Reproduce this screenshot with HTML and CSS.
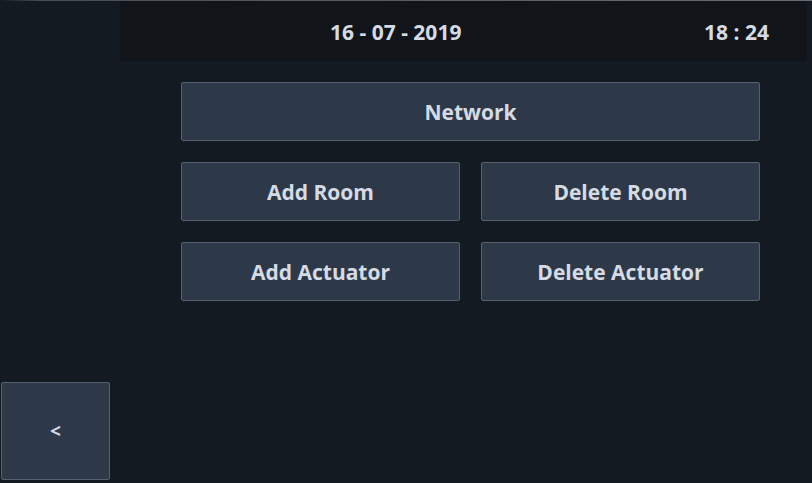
FILE: index.html
```html
<!DOCTYPE html>
<html>
<head>
<meta charset="utf-8">
<link rel="stylesheet" href="styles.css">
</head>
<body>
<div class="app">
  <div class="topline"></div>
  <header class="header">
    <span class="date">16 - 07 - 2019</span>
    <span class="time">18 : 24</span>
  </header>
  <main class="menu">
    <button class="btn wide">Network</button>
    <button class="btn">Add Room</button>
    <button class="btn">Delete Room</button>
    <button class="btn">Add Actuator</button>
    <button class="btn">Delete Actuator</button>
  </main>
  <footer class="footer">
    <button class="btn back">&lt;</button>
  </footer>
</div>
</body>
</html>
```
FILE: styles.css
```css
html, body {
  margin: 0;
  padding: 0;
  background: #141a22;
}
.app {
  width: 812px;
  height: 483px;
  display: flex;
  flex-direction: column;
  font-family: "Open Sans", "Noto Sans", sans-serif;
  font-weight: 700;
  color: #d5dbe4;
}
.topline {
  height: 1px;
  background: linear-gradient(to right, #141a22 0px, #4a4d52 40px, #6a6d70 100%);
}
.header {
  margin-left: 120px;
  width: 687px;
  height: 60px;
  background: #111519;
  display: flex;
  align-items: center;
  font-size: 21px;
  box-sizing: border-box;
  padding: 2px 0 0 210px;
}
.time {
  margin-left: auto;
  margin-right: 38px;
}
.menu {
  margin: 21px 0 0 181px;
  width: 579px;
  display: grid;
  grid-template-columns: 279px 279px;
  grid-auto-rows: 59px;
  column-gap: 21px;
  row-gap: 21px;
}
.btn {
  font: inherit;
  font-size: 21px;
  color: #d5dbe4;
  background: #2d3948;
  border: 1px solid #56616f;
  border-radius: 2px;
  padding: 0;
  box-sizing: border-box;
  margin: 0;
}
.wide {
  grid-column: 1 / 3;
}
.footer {
  margin-top: auto;
  padding: 0 0 3px 1px;
  display: flex;
}
.back {
  width: 109px;
  height: 98px;
  font-size: 19px;
}
```
